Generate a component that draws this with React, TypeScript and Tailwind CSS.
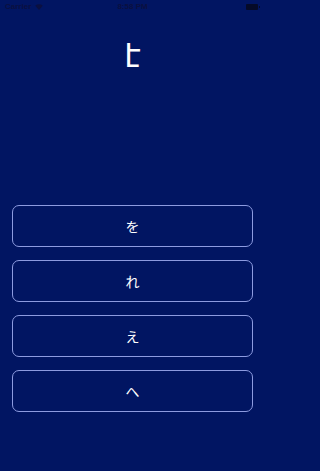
import React from "react";

const OPTIONS = ["を", "れ", "え", "へ"];

function StatusBar() {
  return (
    <div className="flex h-[14px] items-center px-[5px] font-['Liberation_Sans',sans-serif] text-[8px] font-semibold text-[#0b1040]">
      <div className="flex flex-1 items-center gap-[4px]">
        <span>Carrier</span>
        <svg width="8" height="6" viewBox="0 0 16 12" className="fill-[#0b1040]">
          <path d="M8 12 L0.5 3.5 A11 11 0 0 1 15.5 3.5 Z" />
        </svg>
      </div>
      <span>8:58 PM</span>
      <div className="flex flex-1 items-center justify-end gap-[1px]">
        <div className="h-[6px] w-[12px] rounded-[1px] bg-[#050a28]" />
        <div className="h-[2px] w-[1px] bg-[#050a28]" />
      </div>
    </div>
  );
}

export default function App() {
  return (
    <div className="min-h-screen w-full bg-[#011562]">
      <div className="flex h-[471px] w-[265px] flex-col font-['Noto_Sans_CJK_JP','Noto_Sans',sans-serif]">
        <StatusBar />
        <div className="mt-[22px] flex justify-center font-['DejaVu_Sans',sans-serif] text-[32px] leading-[40px] text-white">
          է
        </div>
        <div className="mt-[129px] flex flex-col gap-[13px] px-[12px]">
          {OPTIONS.map((o) => (
            <button
              key={o}
              type="button"
              className="h-[42px] w-full rounded-[7px] border border-[#8d9be0] text-[14px] text-white"
            >
              {o}
            </button>
          ))}
        </div>
      </div>
    </div>
  );
}
